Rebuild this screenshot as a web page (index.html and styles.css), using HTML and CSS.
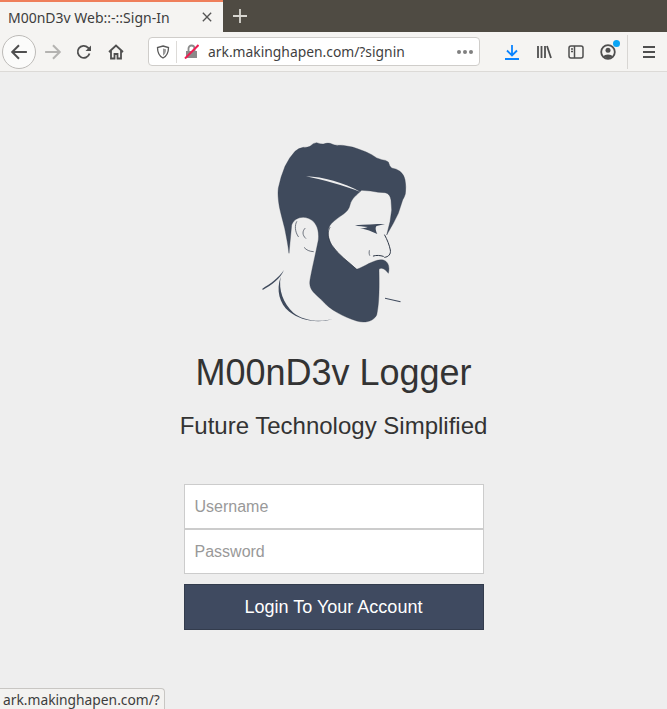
FILE: index.html
```html
<!DOCTYPE html>
<html lang="en">
<head>
<meta charset="utf-8">
<title>M00nD3v Web::-::Sign-In</title>
<link rel="stylesheet" href="styles.css">
</head>
<body>
<header class="chrome">
  <div class="tabbar">
    <div class="tab">
      <span class="tab-title">M00nD3v Web::-::Sign-In</span>
      <svg class="tab-close" viewBox="0 0 12 12"><path d="M1 1l10 10M11 1L1 11"/></svg>
    </div>
    <svg class="new-tab" viewBox="0 0 14 14"><path d="M7 0v14M0 7h14"/></svg>
  </div>
  <div class="toolbar">
    <div class="back"><svg class="ico" viewBox="0 0 16 16"><path d="M15 8H2M8 2L2 8l6 6"/></svg></div>
    <svg class="ico forward" viewBox="0 0 16 16"><path d="M1 8h13M8 2l6 6-6 6"/></svg>
    <svg class="ico reload" viewBox="0 0 16 16"><path d="M13.500 9.500A6 6 0 1 1 12 3.600L14 6"/><path class="solid" d="M15 1.500V7H9.500z"/></svg>
    <svg class="ico home" viewBox="0 0 16 16"><path d="M1 8l7-6.500L15 8M3 6.500V14.500h3.500V10h3v4.500H13V6.500"/></svg>
    <div class="urlbar">
      <svg class="shield" viewBox="0 0 14 14"><path d="M7 1l5.500 1.500C12.500 8 11 11 7 13 3 11 1.500 8 1.500 2.500z"/><path class="shield-half" d="M7 3.500l3 .8C10 7.500 9 9.500 7 10.700z"/></svg>
      <span class="url-sep"></span>
      <svg class="lock" viewBox="0 0 15 15"><path class="lock-body" d="M2 7h11v7H2z"/><path class="lock-bow" d="M4.500 7V4.500a3 3 0 0 1 6 0V7"/><path class="lock-slash" d="M1 14.500L14.500 1"/></svg>
      <span class="url-text">ark.makinghapen.com/?signin</span>
      <span class="dots"><i></i><i></i><i></i></span>
    </div>
    <svg class="ico download" viewBox="0 0 16 16"><path d="M8 1v10M3 6.500L8 11.500l5-5M1 15h14"/></svg>
    <svg class="ico library" viewBox="0 0 16 16"><path d="M2 2v12M5.500 2v12M9 2v12M11 2l4 12"/></svg>
    <svg class="ico sidebar" viewBox="0 0 16 16"><rect x="1" y="2" width="14" height="12" rx="2"/><path d="M6.500 2v12M3 5h2M3 7.500h2"/></svg>
    <div class="account">
      <svg class="ico" viewBox="0 0 16 16"><circle cx="8" cy="8" r="6.800"/><circle class="solid" cx="8" cy="6.300" r="2.500"/><path class="solid" d="M3.500 12.500C4 9.800 12 9.800 12.500 12.500 10 14.500 6 14.500 3.500 12.500z"/></svg>
      <span class="badge"></span>
    </div>
    <span class="tool-sep"></span>
    <svg class="ico menu" viewBox="0 0 16 16"><path d="M2 3h12M2 8h12M2 13h12"/></svg>
  </div>
</header>

<main class="page">
  <svg class="logo" viewBox="0 0 510 600" role="img" aria-label="Bearded man logo">
    <path class="logo-fill logo-hair" d="M85 174Q92 140 105 109 118 82 135 64 146 54 160 52 172 53 180 49 190 38 200 38 212 43 220 42 232 38 240 40 254 47 265 46 278 45 290 48 308 50 325 57 346 64 365 74 380 86 395 89 408 90 415 96 418 108 425 114 440 116 450 124 462 134 465 149 469 170 466 192 463 202 458 210L445 250 430 280 410 315 420 275 425 240 423 210Q420 190 405 188 385 188 362 183L335 181C320 195 305 205 300 225 295 250 270 255 245 280 230 295 232 320 245 345 265 375 295 395 320 418 345 410 375 385 400 390 415 395 420 410 415 430 408 420 395 410 387 418 388 470 388 520 380 555 370 575 345 580 320 573 280 560 240 540 215 510 195 490 175 480 180 450 185 420 195 380 205 330 208 300 200 275 175 265 155 257 132 265 125 285L117 370C113 340 110 325 104 295 98 270 92 250 88 230 84 205 83 190 85 174Z"/>
    <path class="logo-gap" d="M168 139C220 140 280 158 332 186 280 166 220 150 168 139Z"/>
    <path class="logo-fill" d="M315 286C345 284 375 282 405 282L380 288C375 292 377 302 382 312 365 305 350 298 330 295 345 295 350 292 355 291 340 290 325 289 315 286Z"/>
    <path class="logo-line" d="M404 315C412 330 418 345 421 360 423 372 416 381 404 382"/>
    <path class="logo-line" d="M370 378C380 375 390 376 400 379"/>
    <path class="logo-line thin" d="M358 362C357 368 357 372 359 376"/>
    <path class="logo-line thin" d="M140 275C134 285 134 305 145 320"/>
    <path class="logo-line thin" d="M165 295C157 303 156 315 167 325"/>
    <path class="logo-line thin" d="M163 353C170 361 178 364 190 365"/>
    <path class="logo-fill" d="M37 476C60 462 85 445 102 420 92 445 65 465 38 480Z"/>
    <path class="logo-fill" d="M92 440C85 480 100 520 130 548 155 568 200 580 248 567 200 582 150 570 118 545 88 520 78 480 92 440Z"/>
    <path class="logo-fill" d="M405 503L452 514 451 517 405 506Z"/>
    <path class="logo-line thin" d="M240 292C232 305 232 325 245 345 265 375 295 395 320 418"/>
  </svg>
  <h1 class="title">M00nD3v Logger</h1>
  <h2 class="subtitle">Future Technology Simplified</h2>
  <form class="login">
    <input class="field" type="text" placeholder="Username">
    <input class="field" type="password" placeholder="Password">
    <button class="submit" type="button">Login To Your Account</button>
  </form>
</main>

<div class="status">ark.makinghapen.com/?</div>
</body>
</html>
```
FILE: styles.css
```css
* { box-sizing: border-box; }
html, body { margin: 0; height: 100%; }
body {
  position: relative;
  height: 709px;
  overflow: hidden;
  background: #eeeeee;
  font-family: "Liberation Sans", Arial, sans-serif;
}

/* browser chrome */
.chrome { font-family: "Noto Sans", "Open Sans", sans-serif; }
.tabbar {
  display: flex;
  align-items: stretch;
  height: 32px;
  background: #4f4b43;
}
.tab {
  display: flex;
  align-items: center;
  width: 223px;
  padding: 0 11px 0 8px;
  background: #f5f4f2;
  border-top: 2px solid #ef7f5b;
  color: #3d3d3d;
  font-size: 14px;
}
.tab-title { flex: 1; white-space: nowrap; }
.tab-close { width: 10px; height: 10px; fill: none; stroke: #555; stroke-width: 1.6; }
.new-tab { width: 14px; height: 14px; margin: 9px 0 0 10px; fill: none; stroke: #d8d6d0; stroke-width: 1.800; }

.toolbar {
  display: flex;
  align-items: center;
  height: 40px;
  padding-left: 2px;
  background: #f5f4f2;
  border-bottom: 1px solid #dcdad7;
}
.ico {
  display: block;
  width: 16px;
  height: 16px;
  fill: none;
  stroke: #4f4f4f;
  stroke-width: 1.800;
  flex: none;
}
.ico .solid { fill: #4f4f4f; stroke: none; }
.back {
  display: flex;
  align-items: center;
  justify-content: center;
  width: 34px;
  height: 34px;
  border: 1px solid #bdbbb8;
  border-radius: 50%;
  background: #fbfbfa;
}
.back .ico { width: 18px; height: 18px; }
.forward { margin-left: 8px; stroke: #b4b3b1; width: 18px; height: 18px; }
.reload { margin-left: 14px; }
.home { margin-left: 16px; }
.urlbar {
  display: flex;
  align-items: center;
  width: 332px;
  height: 29px;
  margin-left: 24px;
  padding: 0 6px 0 7px;
  background: #fff;
  border: 1px solid #cfcdca;
  border-radius: 4px;
  color: #3f3f3f;
  font-size: 13.850px;
}
.shield { width: 14px; height: 14px; flex: none; fill: none; stroke: #5a5a5a; stroke-width: 1.300; }
.shield-half { fill: #9a9a9a; stroke: none; }
.url-sep { width: 1px; height: 22px; margin: 0 7px 0 6px; background: #dddbd8; }
.lock { width: 15px; height: 15px; flex: none; }
.lock-body { fill: #8a8a8a; }
.lock-bow { fill: none; stroke: #8a8a8a; stroke-width: 1.800; }
.lock-slash { stroke: #ee1d52; stroke-width: 2; }
.url-text { flex: 1; margin-left: 9px; white-space: nowrap; }
.dots { display: flex; gap: 2px; }
.dots i { width: 4px; height: 4px; border-radius: 50%; background: #808080; }
.download { margin-left: 24px; stroke: #0a84ff; }
.library { margin-left: 16px; }
.sidebar { margin-left: 16px; stroke-width: 1.500; }
.account { position: relative; margin-left: 16px; }
.badge {
  position: absolute;
  top: -4px;
  right: -4px;
  width: 7px;
  height: 7px;
  border-radius: 50%;
  background: #0aa5f5;
}
.tool-sep { width: 1px; height: 34px; margin-left: 11px; background: #d8d6d3; }
.menu { margin-left: 13px; }

/* page */
.page {
  display: flex;
  flex-direction: column;
  align-items: center;
}
.logo { display: block; width: 170px; height: 200px; margin: 58px 0 0 3px; }
.logo-fill { fill: #3f4a5c; }
.logo-hair { stroke: #2f3847; stroke-width: 1; }
.logo-gap { fill: #eeeeee; }
.logo-line { fill: none; stroke: #2f3847; stroke-width: 3; stroke-linecap: round; }
.logo-line.thin { stroke-width: 2; }
.title {
  margin: 19px 0 0;
  color: #333;
  font-size: 36px;
  font-weight: 400;
  line-height: 47px;
  white-space: nowrap;
}
.subtitle {
  margin: 14px 0 0;
  color: #333;
  font-size: 24px;
  font-weight: 400;
  line-height: 32px;
  white-space: nowrap;
}
.login { display: flex; flex-direction: column; width: 300px; margin-top: 42px; }
.field {
  display: block;
  width: 100%;
  height: 45px;
  padding: 0 10px;
  background: #fff;
  border: 1px solid #ccc;
  border-radius: 0;
  outline: 0;
  color: #333;
  font: 16px "Liberation Sans", Arial, sans-serif;
}
.field::placeholder { color: #999; opacity: 1; }
.submit {
  height: 46px;
  margin-top: 10px;
  padding: 0;
  background: #3f4a60;
  border: 1px solid #333c4d;
  border-radius: 0;
  color: #fff;
  font: 18px "Liberation Sans", Arial, sans-serif;
}

/* status overlay */
.status {
  position: absolute;
  left: 0;
  bottom: 0;
  height: 21px;
  padding: 0 4px 0 3px;
  background: #f3f2f0;
  border: 1px solid #c8c6c3;
  border-bottom: 0;
  border-left: 0;
  border-top-right-radius: 4px;
  color: #3d3d3d;
  font: 13.800px/21px "Noto Sans", "Open Sans", sans-serif;
}
```
